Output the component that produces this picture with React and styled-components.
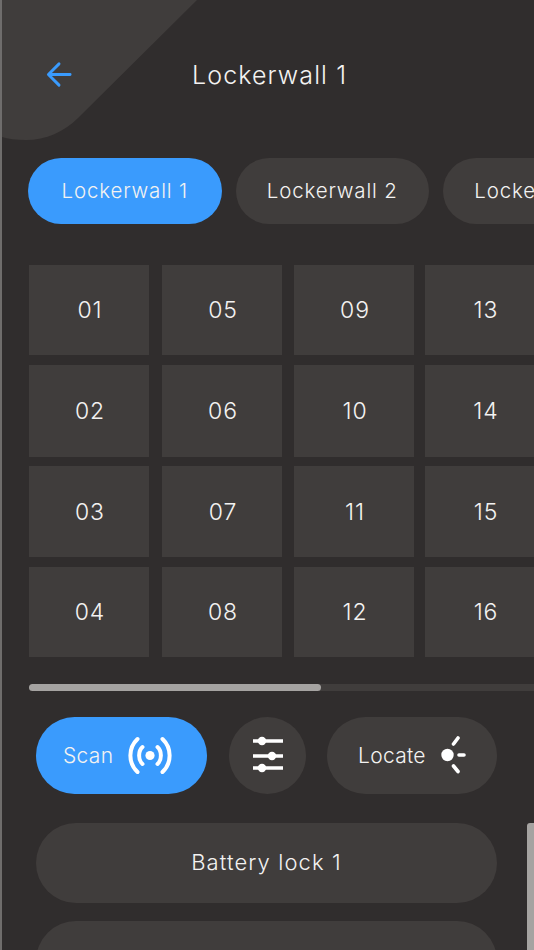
import styled, { createGlobalStyle } from "styled-components";

const walls = ["Lockerwall 1", "Lockerwall 2", "Lockerwall 3"];
const lockers = Array.from({ length: 16 }, (_, i) => String(i + 1).padStart(2, "0"));

const GlobalStyle = createGlobalStyle`
  html, body {
    margin: 0;
    background: #302d2d;
  }
  * {
    box-sizing: border-box;
  }
`;

const App = () => {
  return (
    <Page>
      <GlobalStyle />
      <Header>
        <Corner viewBox="0 0 200 142" aria-hidden="true">
          <path d="M0 0H195L76 118C62 132 44 140 24 140C14 140 6 139 0 137Z" fill="#403d3c" />
        </Corner>
        <Back viewBox="0 0 28 28" aria-hidden="true">
          <path d="M25 14H3M13.5 3L2.5 14L13.5 25" />
        </Back>
        <Title>Lockerwall 1</Title>
      </Header>

      <Tabs>
        {walls.map((wall, i) => (
          <Tab key={wall} $active={i === 0}>
            {wall}
          </Tab>
        ))}
      </Tabs>

      <LockerGrid>
        {lockers.map((num) => (
          <Locker key={num}>{num}</Locker>
        ))}
      </LockerGrid>

      <Track>
        <Thumb />
      </Track>

      <Actions>
        <ScanButton>
          Scan
          <svg width="46" height="38" viewBox="0 0 46 38" fill="none" stroke="#fff" strokeWidth="4" strokeLinecap="round" aria-hidden="true">
            <circle cx="23" cy="19.5" r="4.6" fill="#fff" stroke="none" />
            <path d="M15.5 11C11 15 11 24 15.5 28" />
            <path d="M30.5 11C35 15 35 24 30.5 28" />
            <path d="M10.5 3C1 12 1 27 10.5 36" />
            <path d="M35.5 3C45 12 45 27 35.5 36" />
          </svg>
        </ScanButton>
        <RoundButton aria-label="Filters">
          <svg width="34" height="38" viewBox="0 0 34 38" fill="none" stroke="#fff" strokeWidth="3.6" aria-hidden="true">
            <path d="M2 5H32M2 20H32M2 32H32" />
            <circle cx="11" cy="5" r="4.2" fill="#fff" stroke="none" />
            <circle cx="21" cy="20" r="4.2" fill="#fff" stroke="none" />
            <circle cx="11" cy="32" r="4.2" fill="#fff" stroke="none" />
          </svg>
        </RoundButton>
        <LocateButton>
          Locate
          <svg width="26" height="38" viewBox="0 0 26 38" fill="none" stroke="#fff" strokeWidth="3.6" strokeLinecap="round" aria-hidden="true">
            <circle cx="6.5" cy="19" r="6.2" fill="#fff" stroke="none" />
            <path d="M12.5 8L17 2M18 19H23M12.5 30L17 35.5" />
          </svg>
        </LocateButton>
      </Actions>

      <LockList>
        <LockRow>Battery lock 1</LockRow>
        <LockRow />
      </LockList>

      <SideBar />
    </Page>
  );
};

const Page = styled.div`
  position: relative;
  width: 534px;
  height: 950px;
  overflow: hidden;
  background: #302d2d;
  border-left: 2px solid #6f6d6c;
  color: #f3f2f1;
  font-family: "Inter", "Liberation Sans", sans-serif;
  font-weight: 300;
`;

const Header = styled.header`
  position: relative;
  height: 158px;
`;

const Corner = styled.svg`
  position: absolute;
  left: 0;
  top: 0;
  width: 200px;
  height: 142px;
`;

const Back = styled.svg`
  position: absolute;
  left: 44px;
  top: 61px;
  width: 27px;
  height: 27px;
  fill: none;
  stroke: #3a9bfd;
  stroke-width: 3;
  stroke-linecap: round;
  stroke-linejoin: round;
`;

const Title = styled.h1`
  position: absolute;
  left: 190px;
  top: 59px;
  margin: 0;
  font-size: 25px;
  line-height: 32px;
  font-weight: 300;
  letter-spacing: 1.1px;
  white-space: nowrap;
`;

const Tabs = styled.nav`
  display: flex;
  gap: 14px;
  padding-left: 26px;
  height: 66px;
  margin-bottom: 41px;
`;

const Tab = styled.div`
  flex: 0 0 193.5px;
  height: 66px;
  padding-bottom: 2px;
  border-radius: 33px;
  display: flex;
  align-items: center;
  justify-content: center;
  font-size: 20.5px;
  letter-spacing: 0.85px;
  white-space: nowrap;
  background: ${({ $active }) => ($active ? "#3a9bfd" : "#403d3c")};
`;

const LockerGrid = styled.section`
  display: grid;
  grid-auto-flow: column;
  grid-template-columns: 133px 132px 131px 120px;
  grid-template-rows: 90px 92px 91px 90px;
  row-gap: 9.5px;
  padding-left: 27px;
`;

const Locker = styled.div`
  width: 120px;
  padding-left: 2px;
  background: #403d3c;
  display: flex;
  align-items: center;
  justify-content: center;
  font-size: 23px;
  letter-spacing: 0.9px;
`;

const Track = styled.div`
  height: 7px;
  margin: 27px 0 26px 27px;
  background: #403d3c;
  border-radius: 4px 0 0 4px;
`;

const Thumb = styled.div`
  width: 292px;
  height: 100%;
  background: #a5a3a1;
  border-radius: 4px;
`;

const Actions = styled.div`
  display: flex;
  gap: 21px;
  padding-left: 34px;
  margin-bottom: 29px;
`;

const Pill = styled.button`
  height: 77px;
  border: 0;
  border-radius: 39px;
  display: flex;
  align-items: center;
  color: #f3f2f1;
  font: inherit;
  font-size: 21px;
  letter-spacing: 0.3px;
  background: #403d3c;
`;

const ScanButton = styled(Pill)`
  width: 171px;
  gap: 14px;
  padding: 0 0 0 27px;
  background: #3a9bfd;
`;

const RoundButton = styled(Pill)`
  width: 77px;
  margin-left: 1px;
  padding: 0;
  justify-content: center;
`;

const LocateButton = styled(Pill)`
  width: 170px;
  gap: 15px;
  padding: 0 0 0 31px;
`;

const LockList = styled.div`
  display: flex;
  flex-direction: column;
  gap: 18px;
  padding-left: 34px;
`;

const LockRow = styled.div`
  width: 461px;
  height: 80px;
  flex: none;
  padding-bottom: 2px;
  border-radius: 40px;
  display: flex;
  align-items: center;
  justify-content: center;
  font-size: 22px;
  letter-spacing: 1.1px;
  background: #403d3c;
`;

const SideBar = styled.div`
  position: absolute;
  right: 0;
  top: 823px;
  bottom: 0;
  width: 7px;
  background: #a5a3a1;
  border-radius: 3px 0 0 0;
`;

export default App;
